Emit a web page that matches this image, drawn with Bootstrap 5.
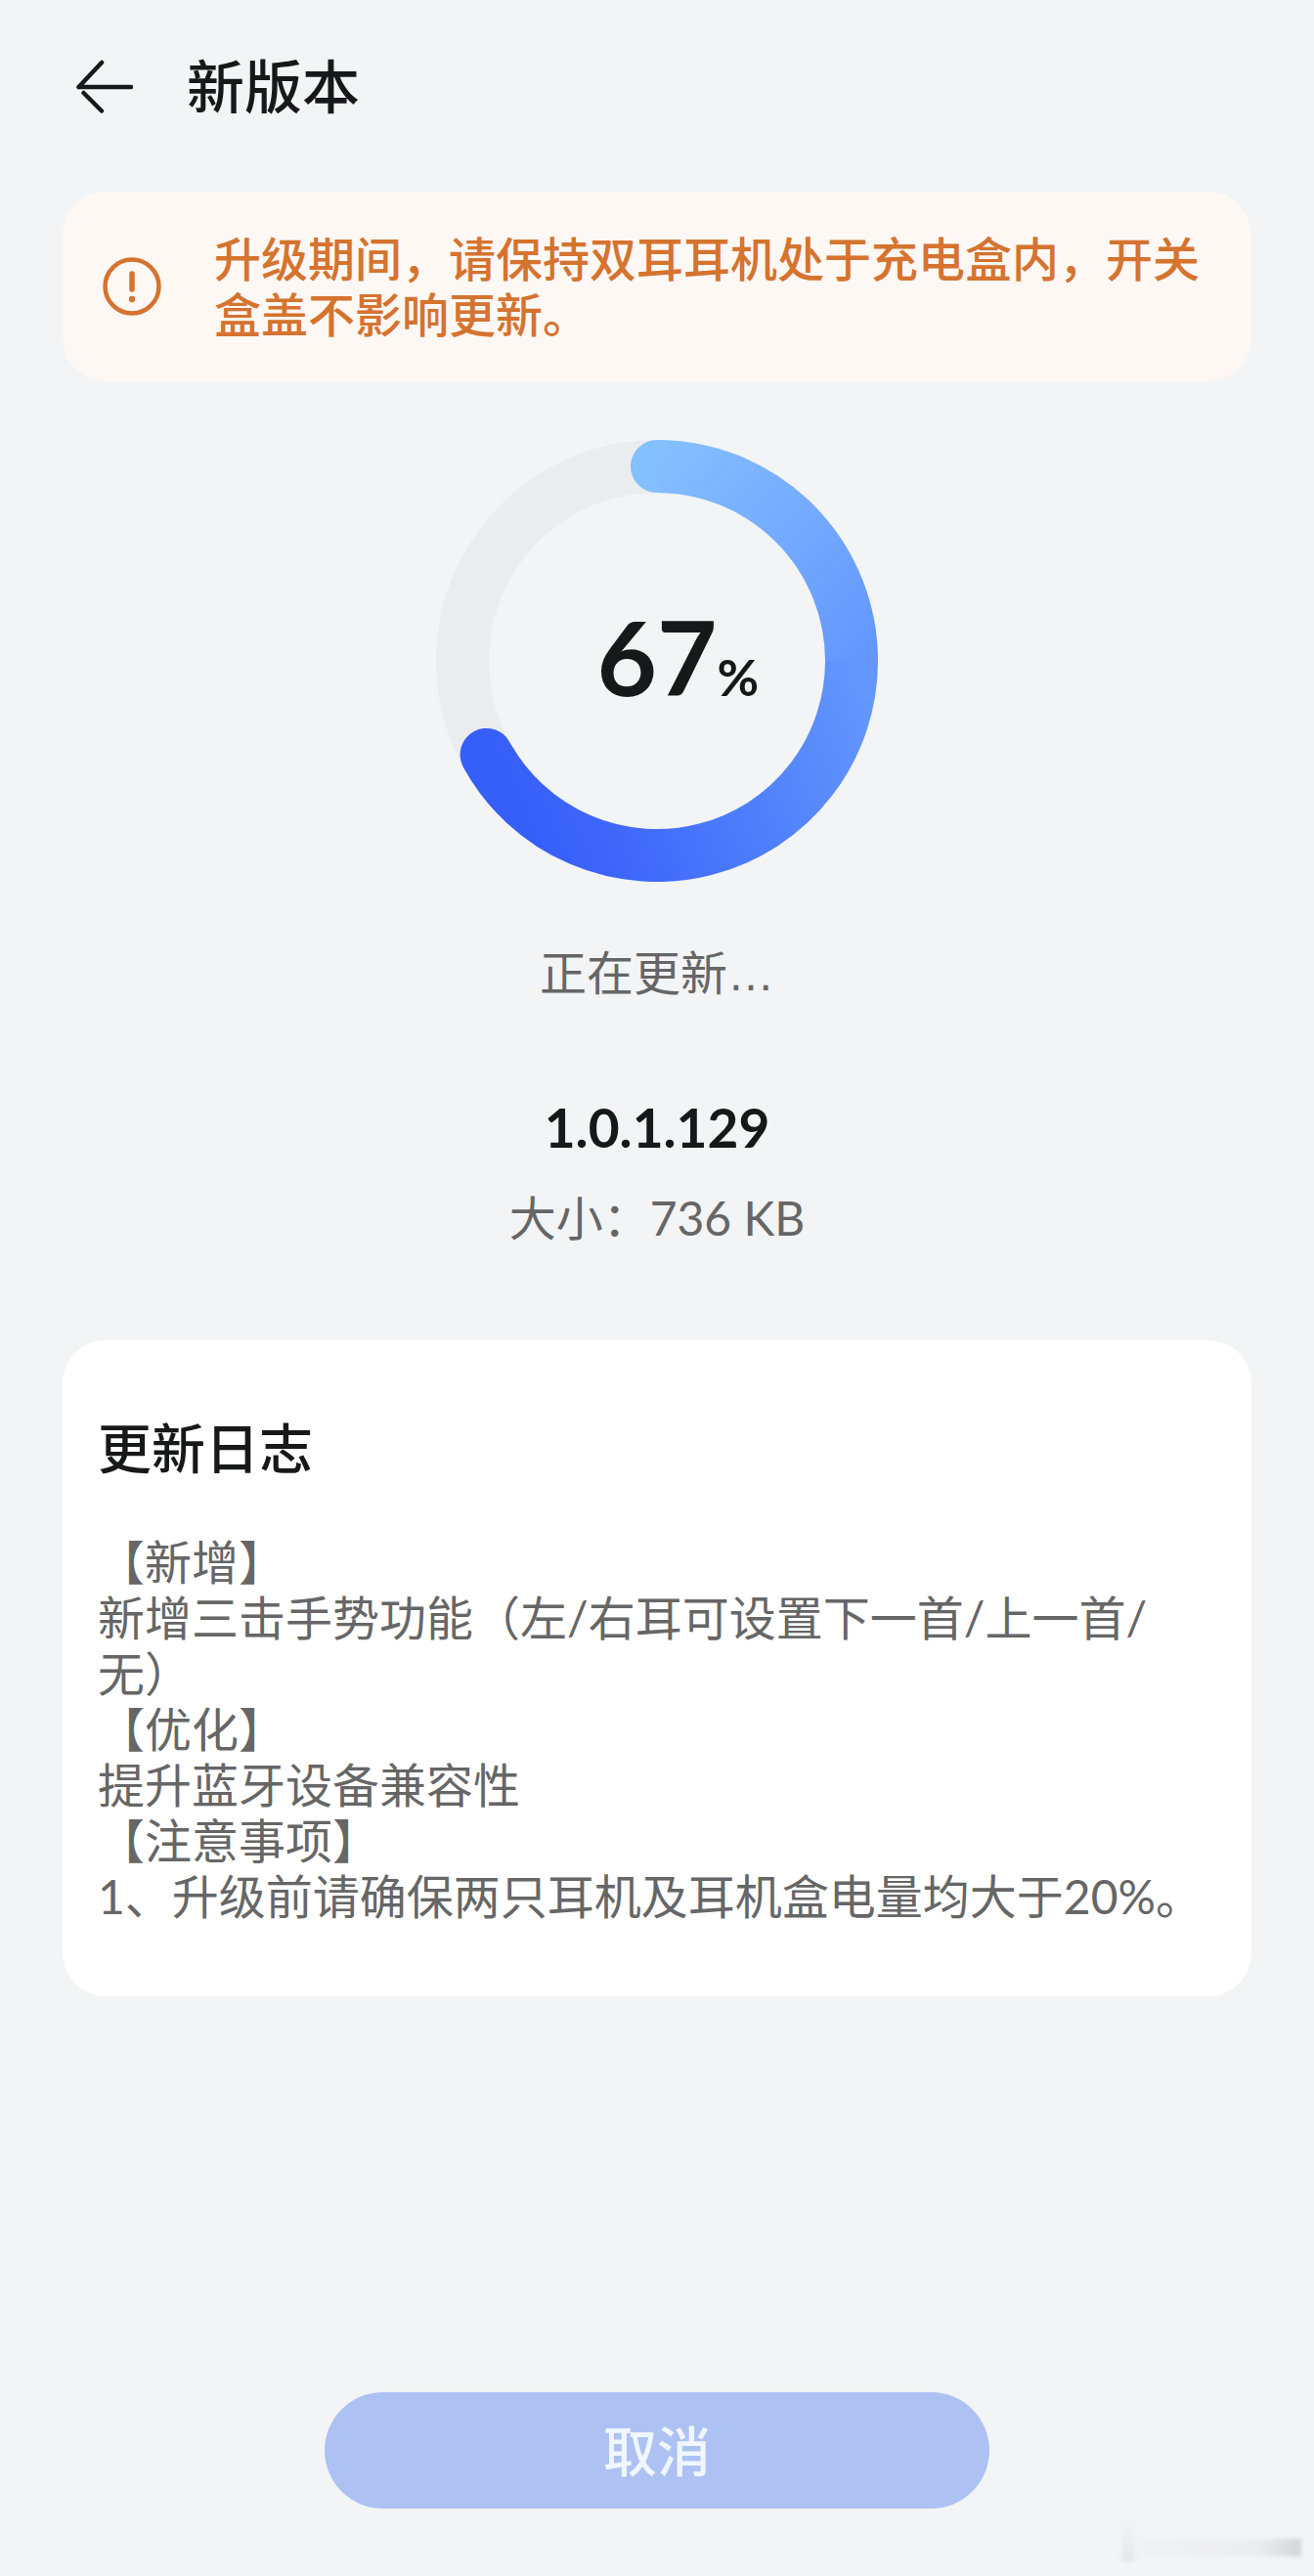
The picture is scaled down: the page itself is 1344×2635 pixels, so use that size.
<!DOCTYPE html>
<html lang="zh-CN">
<head>
<meta charset="utf-8">
<meta name="viewport" content="width=device-width, initial-scale=1">
<title>新版本</title>
<link href="https://cdn.jsdelivr.net/npm/bootstrap@5.3.0/dist/css/bootstrap.min.css" rel="stylesheet">
<style>
  body {
    background: #f2f4f6;
    color: #17181a;
    font-family: Lato, "Noto Sans CJK SC", sans-serif;
    font-size: 48px;
    line-height: 57px;
    text-spacing-trim: space-all;
  }
  .screen { padding: 45px 64px 69px; }
  .top-bar { height: 88px; gap: 54px; padding-left: 13px; margin-bottom: 63px; }
  .page-title { font-size: 59px; line-height: 88px; font-weight: 500; }
  .back-link { color: inherit; }
  .notice {
    background: #fdf8f4;
    color: #d5732f;
    font-weight: 500;
    border-radius: 44px;
    padding: 40px 48px 40px 41px;
    gap: 54px;
    margin-bottom: 60px;
  }
  .ring { width: 452px; height: 452px; margin-bottom: 64px; }
  .ring-value { display: grid; grid-template-columns: 1fr auto 1fr; font-weight: 700; padding-bottom: 10px; }
  .ring-number { grid-column: 2; font-size: 106px; line-height: 120px; }
  .ring-unit { font-size: 52px; line-height: 64px; }
  .soft-text { color: #666; }
  .wide-dots { font-family: "Liberation Sans", sans-serif; line-height: 1; }
  .version { font-size: 55px; line-height: 64px; font-weight: 700; margin: 98px 0 32px; }
  .log-card { border-radius: 44px; padding: 78px 36px 74px; margin-top: 97px; }
  .log-title { font-size: 55px; line-height: 64px; font-weight: 500; margin-bottom: 56px; }
  .cancel-btn {
    --bs-btn-disabled-opacity: 1;
    --bs-btn-disabled-bg: #adc2f3;
    --bs-btn-disabled-color: #f0f6fe;
    --bs-btn-disabled-border-color: transparent;
    width: 56%;
    height: 119px;
    font-size: 55px;
    line-height: 64px;
    font-weight: 500;
  }
  .smudge { right: 10px; bottom: 11px; }
</style>
</head>
<body>
<main class="screen position-relative d-flex flex-column min-vh-100">
  <header class="top-bar d-flex align-items-center">
    <a class="back-link d-flex" href="#" aria-label="返回">
      <svg width="60" height="56" viewBox="0 0 60 56" fill="none" stroke="currentColor" stroke-width="4.5" stroke-linecap="round" stroke-linejoin="round" aria-hidden="true">
        <path d="M57 28H3.500M27 3L3.500 28M8.500 34L27 52.500"/>
      </svg>
    </a>
    <h1 class="page-title mb-0">新版本</h1>
  </header>

  <section class="notice d-flex align-items-center" role="alert">
    <svg class="flex-shrink-0" width="60" height="60" viewBox="0 0 60 60" fill="none" stroke="currentColor" stroke-linecap="round" aria-hidden="true">
      <circle cx="30" cy="30" r="27.500" stroke-width="4.500"/>
      <path d="M30 17V33" stroke-width="5.500"/>
      <circle cx="30" cy="43" r="3.200" fill="currentColor" stroke="none"/>
    </svg>
    <p class="mb-0">升级期间，请保持双耳耳机处于充电盒内，开关盒盖不影响更新。</p>
  </section>

  <section class="text-center">
    <div class="ring position-relative mx-auto d-flex flex-column justify-content-center" role="progressbar" aria-valuenow="67" aria-valuemin="0" aria-valuemax="100" aria-label="更新进度">
      <svg class="position-absolute top-0 start-0 w-100 h-100" viewBox="0 0 452 452" fill="none" stroke-width="54" aria-hidden="true">
        <defs>
          <linearGradient id="arcUpper" gradientUnits="userSpaceOnUse" x1="210" y1="20" x2="430" y2="226">
            <stop offset="0" stop-color="#86c0ff"/>
            <stop offset="1" stop-color="#6497fd"/>
          </linearGradient>
          <linearGradient id="arcLower" gradientUnits="userSpaceOnUse" x1="430" y1="226" x2="80" y2="370">
            <stop offset="0" stop-color="#6497fd"/>
            <stop offset=".4" stop-color="#4f80fb"/>
            <stop offset=".8" stop-color="#3e66fb"/>
            <stop offset="1" stop-color="#355ff8"/>
          </linearGradient>
        </defs>
        <circle cx="226" cy="226" r="199" stroke="#ebecee"/>
        <path d="M425 225A199 199 0 0 1 51.600 321.900" stroke="url(#arcLower)" stroke-linecap="round"/>
        <circle cx="226" cy="27" r="27" fill="#84bffe"/>
        <path d="M226 27A199 199 0 0 1 425 226" stroke="url(#arcUpper)"/>
      </svg>
      <div class="ring-value position-relative align-items-baseline">
        <span class="ring-number">67</span><span class="ring-unit text-start">%</span>
      </div>
    </div>
    <p class="soft-text mb-0">正在更新<span class="wide-dots">…</span></p>
    <h2 class="version">1.0.1.129</h2>
    <p class="soft-text mb-0">大小：736 KB</p>
  </section>

  <section class="log-card bg-white">
    <h2 class="log-title">更新日志</h2>
    <div class="soft-text">
      <p class="mb-0">【新增】</p>
      <p class="mb-0">新增三击手势功能（左/右耳可设置下一首/上一首/无）</p>
      <p class="mb-0">【优化】</p>
      <p class="mb-0">提升蓝牙设备兼容性</p>
      <p class="mb-0">【注意事项】</p>
      <p class="mb-0">1、升级前请确保两只耳机及耳机盒电量均大于20%。</p>
    </div>
  </section>

  <button class="cancel-btn btn rounded-pill mt-auto mx-auto" type="button" disabled>取消</button>

  <svg class="smudge position-absolute" width="190" height="46" viewBox="0 0 190 46" aria-hidden="true">
    <defs>
      <linearGradient id="smudgeBar"><stop offset="0" stop-color="#f1f2f4"/><stop offset=".75" stop-color="#ebecee"/><stop offset="1" stop-color="#d4d5d7"/></linearGradient>
      <linearGradient id="smudgePost" x2="0" y2="1"><stop offset="0" stop-color="#f2f4f6"/><stop offset="1" stop-color="#e4e5e7"/></linearGradient>
      <filter id="smudgeSoft" x="-10%" y="-20%" width="120%" height="140%"><feGaussianBlur stdDeviation="2"/></filter>
    </defs>
    <g filter="url(#smudgeSoft)">
      <rect x="20" y="19" width="167" height="18" fill="url(#smudgeBar)"/>
      <rect x="3" y="2" width="14" height="40" fill="url(#smudgePost)"/>
    </g>
  </svg>
</main>
<script src="https://cdn.jsdelivr.net/npm/bootstrap@5.3.0/dist/js/bootstrap.bundle.min.js"></script>
</body>
</html>
